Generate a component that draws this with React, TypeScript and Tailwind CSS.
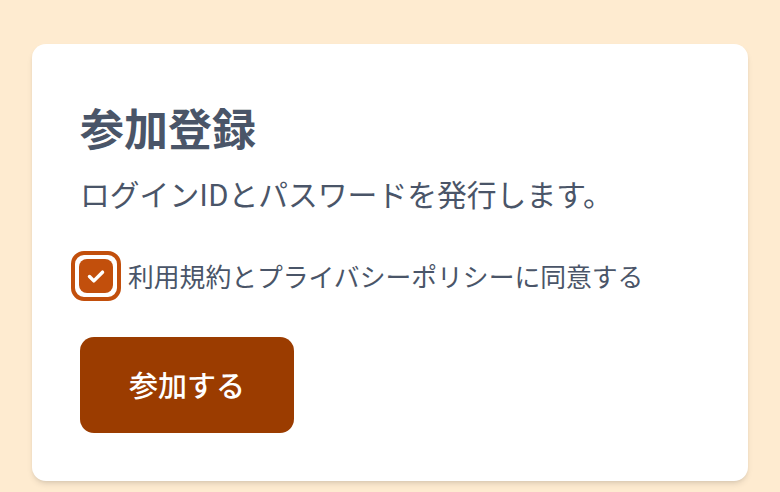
import { useState } from 'react';

export default function App() {
  const [agreed, setAgreed] = useState(true);

  return (
    <div
      className="min-h-screen bg-[#feebd0] px-8 pt-[44px] pb-8"
      style={{ fontFamily: '"Noto Sans CJK JP", "Noto Sans", sans-serif' }}
    >
      <div className="rounded-[14px] bg-white px-12 pt-[56px] pb-12 shadow-md">
        <h1 className="text-[44px] leading-[54px] font-bold text-[#4a5568]">参加登録</h1>
        <p className="mt-[17px] text-[29.8px] leading-[44px] text-[#4a5568]">
          ログインIDとパスワードを発行します。
        </p>

        {/* Agreement checkbox */}
        <label className="mt-[36px] flex cursor-pointer items-center gap-[7px]">
          <span className="ml-[-9px] flex shrink-0 rounded-[13px] border-4 border-[#c24f0c] p-[4px]">
            <button
              type="button"
              onClick={() => setAgreed(!agreed)}
              className="flex h-[34px] w-[34px] items-center justify-center rounded-[8px] bg-[#c24f0c]"
            >
              {agreed && (
                <svg width="26" height="26" viewBox="0 0 24 24" fill="none">
                  <path
                    d="M6 12.5l4 4L18 8.5"
                    stroke="white"
                    strokeWidth="3.2"
                    strokeLinecap="round"
                    strokeLinejoin="round"
                  />
                </svg>
              )}
            </button>
          </span>
          <span className="text-[25.8px] leading-[38px] text-[#4a5568]">
            利用規約とプライバシーポリシーに同意する
          </span>
        </label>

        <button
          type="button"
          className="mt-[36px] h-[96px] w-[214px] rounded-[14px] bg-[#9b3c00] text-[29px] font-medium text-white"
        >
          参加する
        </button>
      </div>
    </div>
  );
}
